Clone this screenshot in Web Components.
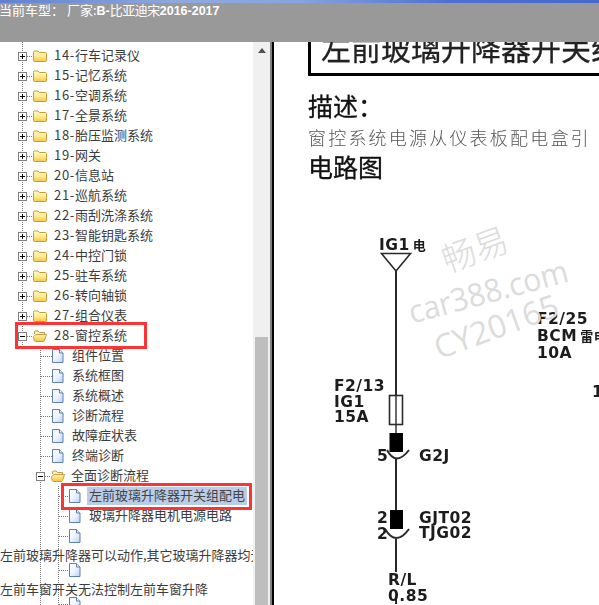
<!DOCTYPE html>
<html lang="zh">
<head>
<meta charset="utf-8">
<title>当前车型</title>
<style>
html,body{margin:0;padding:0;width:599px;height:605px;overflow:hidden;background:#fff}
</style>
</head>
<body>
<template id="t-app">
<style>
:host{display:flex;flex-direction:column;width:599px;height:605px;overflow:hidden;font-family:"Noto Sans CJK SC","Liberation Sans",sans-serif}
.split{flex:1;min-height:0;display:flex}
</style>
<slot name="head"></slot>
<div class="split"><slot></slot></div>
</template>

<template id="t-head">
<style>
:host{display:block;height:42px;flex:none;background:#999;box-sizing:border-box;color:#fff;font-size:13px;overflow:hidden}
.stripe{height:3px;background:linear-gradient(90deg,#5f82d2,#8fa9de 30%,#86a4e0 50%,#4c71d2 75%,#4468cc)}
.line{margin:-2px 0 0 -1px;line-height:18px;white-space:pre}
b{font-family:"Liberation Sans",sans-serif;font-size:12.5px;font-weight:700}
span{letter-spacing:-.5px}
</style>
<div class="stripe"></div>
<div class="line">当前车型： 厂家:<b>B-</b><span>比亚迪宋</span><b>2016-2017</b></div>
</template>

<template id="t-tree">
<style>
:host{display:block;width:253px;flex:none;overflow:hidden;background:#fff;color:#3c3c3c;font-size:13px}
.inner{position:relative;margin-top:-16px}
</style>
<div class="inner"><slot></slot></div>
</template>

<template id="t-bar">
<style>
:host{display:flex;flex-direction:column;align-items:center;width:17px;flex:none;background:#f0f0f0;box-sizing:border-box;padding-top:6px}
.up{width:0;height:0;border:solid transparent;border-width:0 4px 5px;border-bottom-color:#505050}
.thumb{margin-top:auto;width:13px;height:268px;background:#bebebe}
</style>
<div class="up"></div><div class="thumb"></div>
</template>

<template id="t-divider">
<style>
:host{display:flex;flex:none;width:4px}
i{width:2px;background:#808080}b{width:2px;background:#000}
</style><i></i><b></b>
</template>

<template id="t-mark">
<style>
:host{position:absolute;display:block;box-sizing:border-box;border:3px solid #fb3535;pointer-events:none}
</style>
</template>

<template id="t-doc">
<style>
:host{display:block;flex:1;min-width:0;overflow:hidden;background:#fff;color:#111;padding-left:34px}
.title{box-sizing:border-box;width:340px;height:44px;margin-top:-10px;border:3px solid #000;padding:0 0 0 10px;font-size:30px;line-height:24px;white-space:nowrap;overflow:hidden;color:#222;-webkit-text-stroke:.3px #222;filter:blur(.4px)}
.h{font-size:25px;line-height:30px;margin:0;-webkit-text-stroke:.3px #111;filter:blur(.3px)}
.d{margin-top:14px}
.p{font-size:18px;font-weight:300;letter-spacing:2.2px;line-height:24px;color:#555;white-space:nowrap;margin-top:5px;filter:blur(.3px)}
.e{margin-top:2px}
svg{display:block;margin:3px 0 0 -34px;overflow:visible}
svg .lab{font-family:"DejaVu Sans",sans-serif;font-weight:700;font-size:15.5px;letter-spacing:.5px;fill:#1c1c1c}
.wm text{fill:#dcdcdc;font-family:"Open Sans",sans-serif;font-size:32px}
.ink{filter:blur(.45px)}
</style>
<div class="title">左前玻璃升降器开关组配电</div>
<div class="h d">描述：</div>
<div class="p">窗控系统电源从仪表板配电盒引</div>
<div class="h e">电路图</div>
<svg width="325" height="420" viewBox="274 185 325 420" aria-label="电路图">
 <g class="ink">
  <g fill="none" stroke="#2a2a2a">
   <path d="M381.500 254.500H410.500L396 272Z" stroke-width="1.6"/>
   <path d="M396 272V396" stroke-width="2"/>
   <rect x="389.500" y="396.500" width="13" height="29" stroke-width="1.6"/>
   <path d="M396 396V434" stroke-width="1.4"/>
   <path d="M387 451Q396 468 409 451" stroke-width="2"/>
   <path d="M396 460V511" stroke-width="2"/>
   <path d="M385 530Q396 548 409 530" stroke-width="2"/>
   <path d="M396 540V573" stroke-width="2"/>
   <path d="M396 600V605" stroke-width="2"/>
  </g>
  <rect x="389.500" y="434" width="13.500" height="19" fill="#000"/>
  <rect x="390" y="511" width="13" height="19" fill="#000"/>
  <text class="lab" x="379" y="251">IG1<tspan dx="3" font-family="Noto Sans CJK SC" font-size="13">电</tspan></text>
  <text class="lab" x="334" y="392">F2/13</text>
  <text class="lab" x="334" y="408">IG1</text>
  <text class="lab" x="334" y="423">15A</text>
  <text class="lab" x="377" y="462">5</text>
  <text class="lab" x="419" y="462">G2J</text>
  <text class="lab" x="377" y="524">2</text>
  <text class="lab" x="377" y="540">2</text>
  <text class="lab" x="419" y="524">GJT02</text>
  <text class="lab" x="419" y="539">TJG02</text>
  <text class="lab" x="388" y="586">R/L</text>
  <text class="lab" x="388" y="602">0.85</text>
  <text class="lab" x="537" y="325">F2/25</text>
  <text class="lab" x="537" y="342">BCM<tspan dx="3" font-family="Noto Sans CJK SC" font-size="13">雷电</tspan></text>
  <text class="lab" x="537" y="359">10A</text>
  <text class="lab" x="592" y="398">1</text>
 </g>
 <g class="wm">
  <text x="475" y="263" text-anchor="middle" transform="rotate(-20 475 251)" style="font-family:'Noto Sans CJK SC';font-size:34px;font-weight:300">畅易</text>
  <text x="488" y="304" text-anchor="middle" transform="rotate(-15 488 292)" textLength="164" lengthAdjust="spacingAndGlyphs">car388.com</text>
  <text x="496" y="339" text-anchor="middle" transform="rotate(-20 496 327)" textLength="130" lengthAdjust="spacingAndGlyphs">CY20165</text>
 </g>
</svg>
</template>

<script>
function tpl(id){return document.getElementById(id).content.cloneNode(true)}
function simple(name,id){customElements.define(name,class extends HTMLElement{
  constructor(){super();this.attachShadow({mode:'open'}).appendChild(tpl(id))}
})}
simple('car-app','t-app');simple('car-head','t-head');simple('car-tree','t-tree');
simple('car-bar','t-bar');simple('car-divider','t-divider');simple('car-doc','t-doc');
simple('car-mark','t-mark');

const FOLDER=`<svg width="14" height="12" viewBox="0 0 14 12"><defs><linearGradient id="f" x1="0" y1="0" x2="0" y2="1"><stop offset="0" stop-color="#fffbd0"/><stop offset=".55" stop-color="#ffe98a"/><stop offset="1" stop-color="#f3c548"/></linearGradient></defs><path d="M.5 2.500Q.5 1 1.500 1H5L6.500 2.500H12.500Q13.500 2.500 13.500 3.500V10.500Q13.500 11.500 12.500 11.500H1.500Q.5 11.500 .5 10.500Z" fill="url(#f)" stroke="#c79c3a"/></svg>`;
const OPEN=`<svg width="14" height="12" viewBox="0 0 14 12"><defs><linearGradient id="o" x1="0" y1="0" x2="0" y2="1"><stop offset="0" stop-color="#fff6b0"/><stop offset="1" stop-color="#f2c440"/></linearGradient></defs><path d="M1.500 4V2Q1.500 1 2.500 1H5L6.500 2.500H11.500V4.500" fill="#fbf3c8" stroke="#b39a50"/><path d="M3 4.500H13.500L11.500 10.500Q11.200 11.500 10.500 11.500H2.500Q1.500 11.500 1.200 10.500L.5 7.500Q.3 6 1.500 5.500Z" fill="url(#o)" stroke="#c79c3a"/></svg>`;
const DOC=`<svg width="12" height="14" viewBox="0 0 12 14"><defs><linearGradient id="d" x1="0" y1="0" x2="1" y2="1"><stop offset="0" stop-color="#fff"/><stop offset=".5" stop-color="#eef4ff"/><stop offset="1" stop-color="#b9d0f4"/></linearGradient></defs><path d="M.5.5H7.500L11 4V13.500H.5Z" fill="url(#d)" stroke="#5f7fae"/><path d="M7.500.5V4H11" fill="#dfe9f8" stroke="#5f7fae"/></svg>`;

customElements.define('tree-row',class extends HTMLElement{
  constructor(){super();this.attachShadow({mode:'open'})}
  connectedCallback(){
    const a=n=>this.getAttribute(n);
    const kind=a('icon'),exp=a('exp'),indent=+a('indent')||0,line=+a('line')||0,gap=a('gap')||7,num=a('num')||'';
    const guides=(a('guides')||'').split(' ').filter(Boolean);
    const bg=guides.map(()=>'repeating-linear-gradient(#777 0 1px,transparent 1px 2px)').join(',');
    const pos=guides.map(x=>x+'px 0').join(',');
    const icon=kind==='folder'?FOLDER:kind==='open'?OPEN:kind==='doc'?DOC:'';
    const box=exp?`<span class="exp">${exp==='plus'?'<i class="h"></i><i class="v"></i>':'<i class="h"></i>'}</span>`:'';
    const isText=this.hasAttribute('plain');
    const label=this.hasAttribute('blank')?'':isText?'<span class="p"><slot></slot></span>':`<span class="t">${num?`<b>${num}</b>`:''}<slot></slot></span>`;
    this.shadowRoot.innerHTML=`<style>
      :host{display:block;height:${isText?14:20}px;background-image:${bg||'none'};background-size:1px 100%;background-position:${pos||'0 0'};background-repeat:no-repeat;white-space:nowrap}
      .r{display:flex;align-items:center;height:100%;padding-left:${indent}px}
      .exp{position:relative;box-sizing:border-box;width:9px;height:9px;border:1px solid #808080;background:#fff;flex:none}
      .exp i{position:absolute;background:#000}
      .exp .h{left:1px;top:3px;width:5px;height:1px}.exp .v{left:3px;top:1px;width:1px;height:5px}
      .l{flex:none;width:${line}px;height:1px;background:repeating-linear-gradient(90deg,#777 0 1px,transparent 1px 2px)}
      svg{display:block;flex:none}
      .t{margin-left:${gap}px;line-height:16px;height:18px;${this.hasAttribute('selected')?'background:#b9cde8;padding:0 2px;color:#444;':''}}
      .p{line-height:18px;height:18px;margin-top:3px}
      b{font-weight:400;letter-spacing:.7px}
    </style><div class="r">${box}<span class="l"></span>${icon}${label}</div>`;
  }
});
</script>

<car-app>
  <car-head slot="head"></car-head>
  <car-tree>
    <tree-row icon="folder" exp="plus" indent="18" line="6" guides="22" blank></tree-row>
    <tree-row icon="folder" exp="plus" indent="18" line="6" guides="22" num="14-">行车记录仪</tree-row>
    <tree-row icon="folder" exp="plus" indent="18" line="6" guides="22" num="15-">记忆系统</tree-row>
    <tree-row icon="folder" exp="plus" indent="18" line="6" guides="22" num="16-">空调系统</tree-row>
    <tree-row icon="folder" exp="plus" indent="18" line="6" guides="22" num="17-">全景系统</tree-row>
    <tree-row icon="folder" exp="plus" indent="18" line="6" guides="22" num="18-">胎压监测系统</tree-row>
    <tree-row icon="folder" exp="plus" indent="18" line="6" guides="22" num="19-">网关</tree-row>
    <tree-row icon="folder" exp="plus" indent="18" line="6" guides="22" num="20-">信息站</tree-row>
    <tree-row icon="folder" exp="plus" indent="18" line="6" guides="22" num="21-">巡航系统</tree-row>
    <tree-row icon="folder" exp="plus" indent="18" line="6" guides="22" num="22-">雨刮洗涤系统</tree-row>
    <tree-row icon="folder" exp="plus" indent="18" line="6" guides="22" num="23-">智能钥匙系统</tree-row>
    <tree-row icon="folder" exp="plus" indent="18" line="6" guides="22" num="24-">中控门锁</tree-row>
    <tree-row icon="folder" exp="plus" indent="18" line="6" guides="22" num="25-">驻车系统</tree-row>
    <tree-row icon="folder" exp="plus" indent="18" line="6" guides="22" num="26-">转向轴锁</tree-row>
    <tree-row icon="folder" exp="plus" indent="18" line="6" guides="22" num="27-">组合仪表</tree-row>
    <tree-row icon="open" exp="minus" indent="18" line="6" guides="22" num="28-">窗控系统</tree-row>
    <tree-row icon="doc" indent="41" line="11" gap="8" guides="40">组件位置</tree-row>
    <tree-row icon="doc" indent="41" line="11" gap="8" guides="40">系统框图</tree-row>
    <tree-row icon="doc" indent="41" line="11" gap="8" guides="40">系统概述</tree-row>
    <tree-row icon="doc" indent="41" line="11" gap="8" guides="40">诊断流程</tree-row>
    <tree-row icon="doc" indent="41" line="11" gap="8" guides="40">故障症状表</tree-row>
    <tree-row icon="doc" indent="41" line="11" gap="8" guides="40">终端诊断</tree-row>
    <tree-row icon="open" exp="minus" indent="36" line="6" gap="6" guides="40">全面诊断流程</tree-row>
    <tree-row icon="doc" indent="59" line="10" gap="6" guides="40 58" selected>左前玻璃升降器开关组配电</tree-row>
    <tree-row icon="doc" indent="59" line="10" gap="8" guides="40 58">玻璃升降器电机电源电路</tree-row>
    <tree-row icon="doc" indent="59" line="10" guides="40 58" blank></tree-row>
    <tree-row plain guides="40 58">左前玻璃升降器可以动作,其它玻璃升降器均无法动作</tree-row>
    <tree-row icon="doc" indent="59" line="10" guides="40 58" blank></tree-row>
    <tree-row plain guides="40 58">左前车窗开关无法控制左前车窗升降</tree-row>
    <tree-row icon="doc" indent="59" line="10" guides="40 58" blank></tree-row>
    <car-mark style="left:15px;top:296px;width:132px;height:27px"></car-mark>
    <car-mark style="left:61px;top:457px;width:191px;height:27px"></car-mark>
  </car-tree>
  <car-bar></car-bar>
  <car-divider></car-divider>
  <car-doc></car-doc>
</car-app>
</body>
</html>
